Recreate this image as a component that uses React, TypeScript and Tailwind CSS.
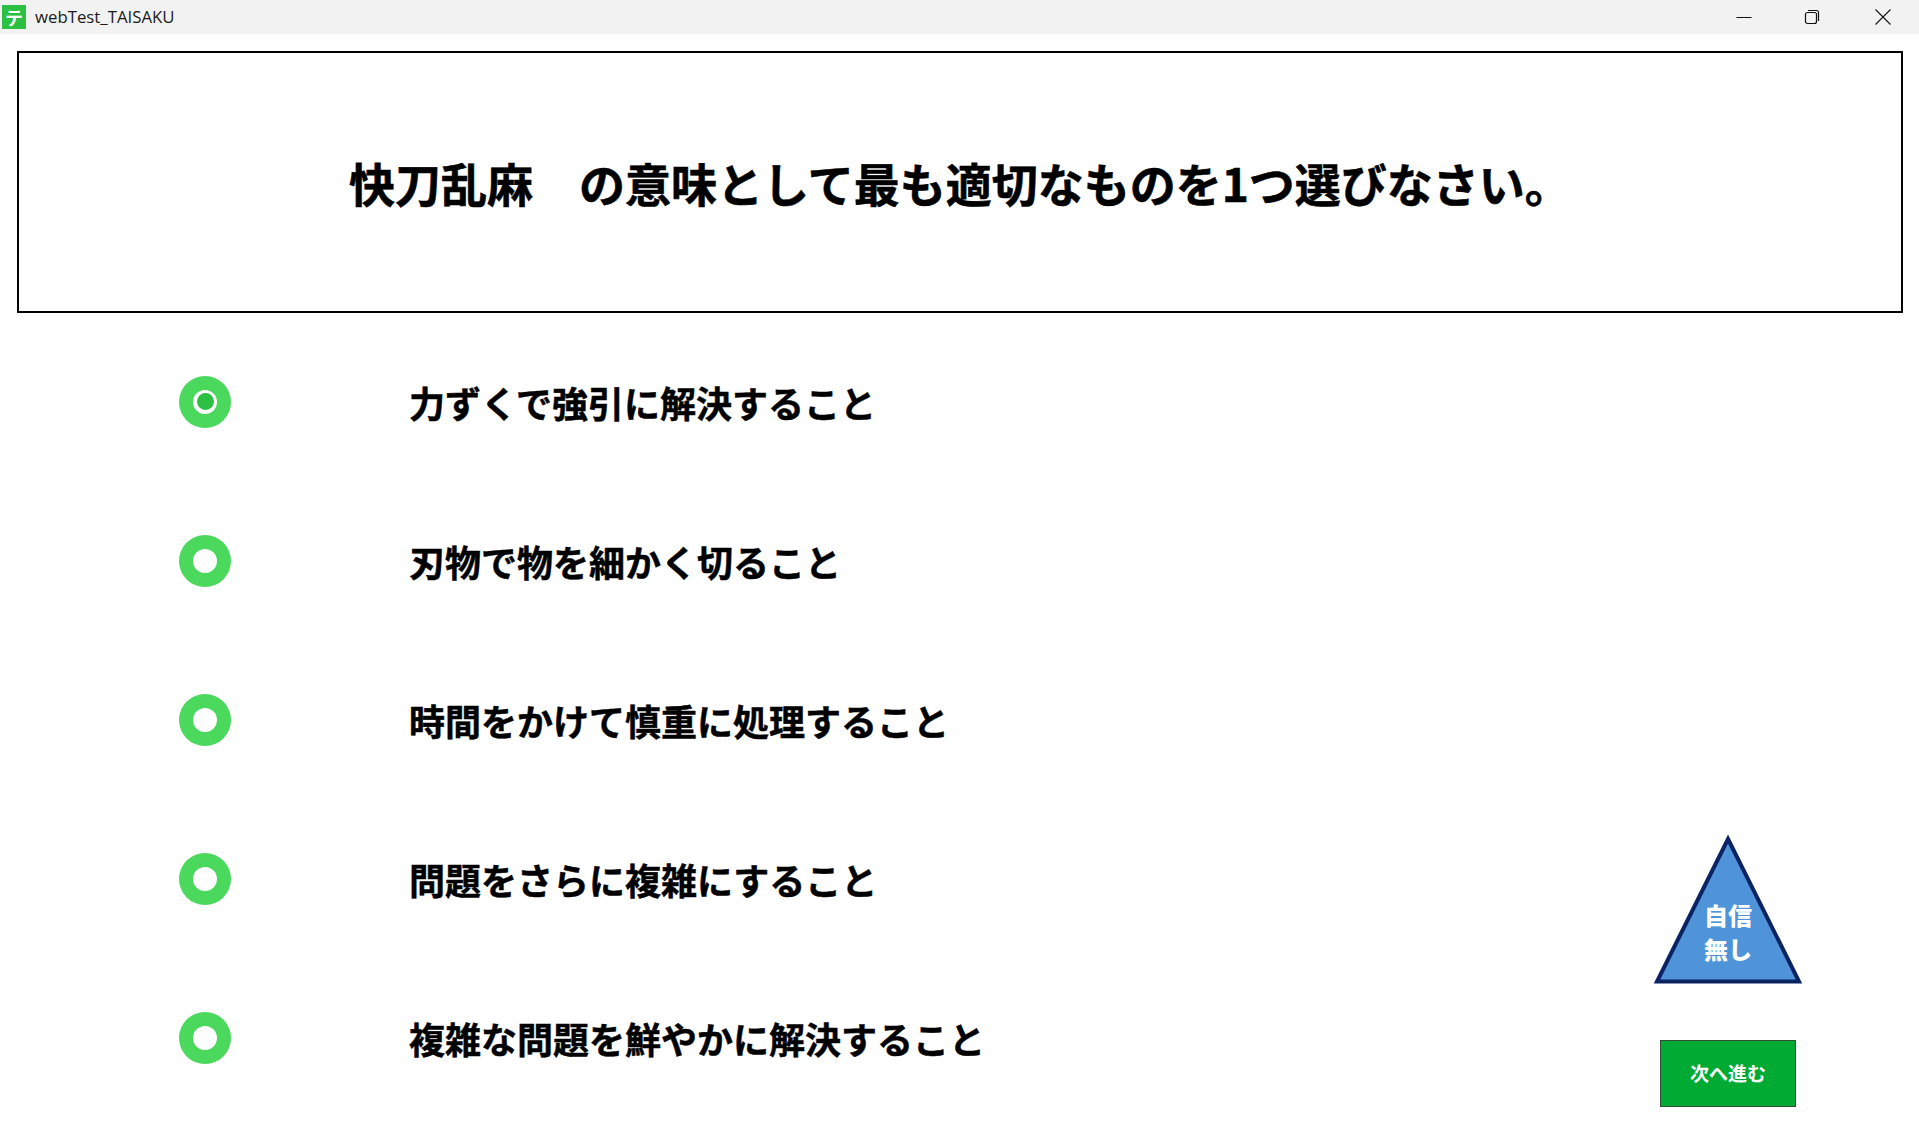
const jp = "font-['Noto_Sans_CJK_JP','Noto_Sans',sans-serif]";

const options = [
  { label: "力ずくで強引に解決すること", selected: true },
  { label: "刃物で物を細かく切ること" },
  { label: "時間をかけて慎重に処理すること" },
  { label: "問題をさらに複雑にすること" },
  { label: "複雑な問題を鮮やかに解決すること" },
];

const TitleBar = () => {
  return (
    <header className="flex h-[34px] items-center bg-[#f2f2f2]">
      {/* App icon */}
      <div className={`ml-[2px] flex h-[24px] w-[24px] items-center justify-center bg-[#2cc043] text-[18px] leading-none font-bold text-white ${jp}`}>
        テ
      </div>
      <span className="ml-[9px] font-['Open_Sans',sans-serif] text-[16.800px] text-[#1a1a1a]">webTest_TAISAKU</span>

      {/* Window buttons */}
      <div className="ml-auto flex items-center">
        <svg width="16" height="16" viewBox="0 0 16 16" className="mr-[52px]">
          <path d="M0.5 8.5H15.5" stroke="#111" strokeWidth="1" fill="none" />
        </svg>
        <svg width="16" height="16" viewBox="0 0 16 16" className="mr-[55px]">
          <rect x="1.500" y="3.500" width="11" height="11" rx="2" stroke="#111" strokeWidth="1.2" fill="none" />
          <path d="M4 1.500H12.500C13.600 1.500 14.500 2.400 14.500 3.500V12" stroke="#111" strokeWidth="1.2" fill="none" />
        </svg>
        <svg width="16" height="16" viewBox="0 0 16 16" className="mr-[28px]">
          <path d="M0.500 0.500L15.500 15.500M15.500 0.500L0.500 15.500" stroke="#111" strokeWidth="1.1" fill="none" />
        </svg>
      </div>
    </header>
  );
};

const Radio = ({ selected }: { selected?: boolean }) => {
  return (
    <div className="flex h-[52px] w-[52px] shrink-0 items-center justify-center rounded-full bg-[#4ad95c]">
      <div className="flex h-[24px] w-[24px] items-center justify-center rounded-full bg-white">
        {selected && <div className="h-[17px] w-[17px] rounded-full bg-[#2cc043]"></div>}
      </div>
    </div>
  );
};

const App = () => {
  return (
    <div className={`flex h-[1127px] flex-col overflow-hidden bg-white text-black ${jp}`}>
      <TitleBar />

      {/* Question */}
      <div className="mt-[17px] mr-[16px] ml-[17px] flex h-[262px] items-center justify-center border-2 border-black">
        <h1 className="text-[46px] leading-none font-bold [-webkit-text-stroke:0.6px_black]">快刀乱麻　の意味として最も適切なものを1つ選びなさい。</h1>
      </div>

      <main className="mt-[9px] flex flex-1 justify-between pr-[116px] pl-[179px]">
        {/* Choices */}
        <ul className="flex flex-col">
          {options.map((option) => (
            <li key={option.label} className="flex h-[159px] items-center gap-[178px]">
              <Radio selected={option.selected} />
              <span className="text-[36px] leading-none font-bold [-webkit-text-stroke:0.5px_black]">{option.label}</span>
            </li>
          ))}
        </ul>

        {/* Confidence + next */}
        <div className="mt-[512px] flex w-[150px] flex-col items-center">
          <div className="relative h-[150px] w-[150px]">
            <svg width="150" height="150" viewBox="0 0 150 150">
              <path d="M75 5L146 147.500H4Z" fill="#4f94d9" stroke="#0b2263" strokeWidth="4" />
            </svg>
            <div className="absolute inset-x-0 top-[64px] text-center text-[24px] leading-[34px] font-black text-white">
              自信
              <br />
              無し
            </div>
          </div>
          <button className="mt-[56px] flex h-[67px] w-[136px] items-center justify-center border border-[#2f4f35] bg-[#00aa33] text-[19px] font-bold text-white">
            次へ進む
          </button>
        </div>
      </main>
    </div>
  );
};

export default App;
